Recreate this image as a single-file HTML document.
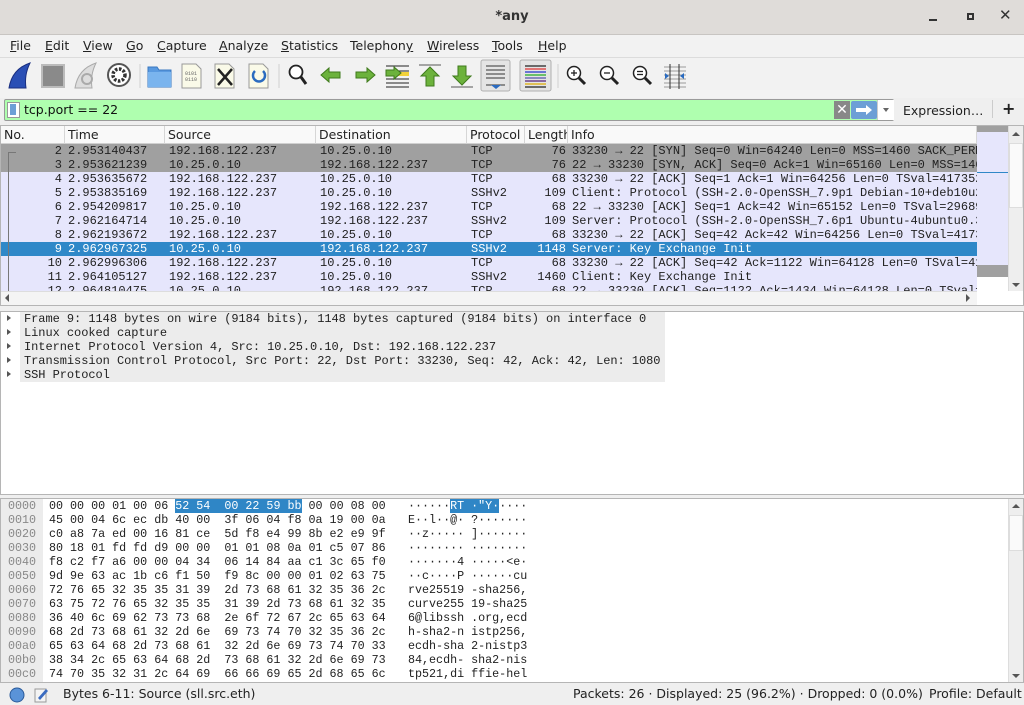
<!DOCTYPE html>
<html><head><meta charset="utf-8"><style>
*{margin:0;padding:0;box-sizing:border-box}
body{width:1024px;height:705px;overflow:hidden;background:#efefef;font-family:"DejaVu Sans","Liberation Sans",sans-serif;font-size:12.5px;color:#222;position:relative}
.a{position:absolute}
.mono{font-family:"Liberation Mono",monospace;font-size:12px;white-space:pre}
#title{left:0;top:0;width:1024px;height:35px;background:#dfdcd9;border-bottom:1px solid #c8c5c2}
#menu{left:0;top:35px;width:1024px;height:22px;background:#f2f2f2}
#menu span{position:absolute;top:3px}
#tb{left:0;top:57px;width:1024px;height:41px;background:#f2f2f2;border-top:1px solid #dcdcdc}
#filt{left:4px;top:99px;width:890px;height:22px;background:#afffaf;border:1px solid #9a9a9a;border-radius:2px}
#plist{left:0;top:125px;width:1024px;height:181px;background:#fff;border:1px solid #b5b5b5}
.hdr{position:absolute;top:126px;height:18px;border-right:1px solid #d6d6d6;background:#f9f9f9;border-bottom:1px solid #d0d0d0;padding-left:3px;line-height:17px;font-size:12.5px}
.row{position:absolute;left:1px;width:976px;height:14px;line-height:14px;overflow:hidden}
.row span{position:absolute;top:0}
#det{left:0;top:311px;width:1024px;height:184px;background:#fff;border:1px solid #b5b5b5}
.dl{position:absolute;left:20px;width:645px;height:14px;line-height:14px;background:#ececec;font-family:"Liberation Mono",monospace;font-size:12px;letter-spacing:-0.05px;white-space:pre;color:#222;padding-left:4px}
.tri{position:absolute;left:7px;width:0;height:0;border-left:4px solid #555;border-top:3.5px solid transparent;border-bottom:3.5px solid transparent}
#hex{left:0;top:498px;width:1024px;height:185px;background:#fff;border:1px solid #b5b5b5}
.hr{position:absolute;left:0;height:14px;line-height:14px;font-family:"Liberation Mono",monospace;font-size:11.7px;white-space:pre;color:#222}
.sel{background:#2f86c6;color:#fff}
#status{left:0;top:683px;width:1024px;height:22px;background:#efefef}
</style></head><body>

<div id="title" class="a"><div class="a" style="left:0;width:1024px;top:9px;text-align:center;font-weight:bold;font-size:13px;color:#333">*any</div>
<div class="a" style="left:929px;top:19px;width:8px;height:2px;background:#333"></div>
<div class="a" style="left:967px;top:13px;width:7px;height:7px;border:2px solid #333"></div>
<div class="a" style="left:999px;top:6px;font-size:15px;font-weight:bold;color:#333">✕</div>
</div>

<div id="menu" class="a">
<span style="left:10px"><u>F</u>ile</span><span style="left:45px"><u>E</u>dit</span><span style="left:83px"><u>V</u>iew</span><span style="left:126px"><u>G</u>o</span><span style="left:157px"><u>C</u>apture</span><span style="left:219px"><u>A</u>nalyze</span><span style="left:281px"><u>S</u>tatistics</span><span style="left:350px">Telephon<u>y</u></span><span style="left:427px"><u>W</u>ireless</span><span style="left:492px"><u>T</u>ools</span><span style="left:538px"><u>H</u>elp</span>
</div>

<div id="tb" class="a"></div>
<svg class="a" style="left:0;top:57px" width="700" height="41">
<path d="M9 31 Q12 12 30 6 Q24 18 26 31 Z" fill="#2a4fb5" stroke="#1a2f80"/>
<rect x="42" y="8" width="22" height="22" fill="#8a8a8a" stroke="#bbb" stroke-width="2"/>
<path d="M75 31 Q78 12 96 6 Q90 18 92 31 Z" fill="#ddd" stroke="#aaa"/><circle cx="87" cy="22" r="5" fill="none" stroke="#aaa" stroke-width="2"/>
<circle cx="119" cy="18" r="11" fill="#fff" stroke="#555" stroke-width="2"/><circle cx="119" cy="18" r="6" fill="none" stroke="#333" stroke-width="3.5" stroke-dasharray="2.5 1.5"/><circle cx="119" cy="18" r="2.5" fill="#fff"/>
<line x1="140" y1="7" x2="140" y2="31" stroke="#d0d0d0"/>
<path d="M148 10 h9 l2 3 h12 v17 h-23 Z" fill="#5a9ae0" stroke="#3a78c0"/><rect x="148" y="15" width="23" height="15" fill="#7ab4ee"/>
<path d="M182 7 h14 l5 5 v19 h-19 Z" fill="#fafae8" stroke="#999"/><text x="185" y="18" font-size="5" fill="#666" font-family="Liberation Mono">0101</text><text x="185" y="24" font-size="5" fill="#666" font-family="Liberation Mono">0110</text>
<path d="M215 7 h14 l5 5 v19 h-19 Z" fill="#fafae8" stroke="#999"/><path d="M218 12 L232 28 M232 12 L218 28" stroke="#222" stroke-width="2.5"/>
<path d="M249 7 h14 l5 5 v19 h-19 Z" fill="#fafae8" stroke="#999"/><path d="M263 14 A6 6 0 1 1 255 14" fill="none" stroke="#2a6bc0" stroke-width="2.5"/>
<line x1="279" y1="7" x2="279" y2="31" stroke="#d0d0d0"/>
<circle cx="296" cy="15" r="6.5" fill="#fff" stroke="#222" stroke-width="1.8"/><line x1="301" y1="20" x2="306" y2="27" stroke="#222" stroke-width="3"/>
<path d="M321 18 l8 -7 v4 h11 v6 h-11 v4 Z" fill="#6cb23c" stroke="#3f7a1c"/>
<path d="M375 18 l-8 -7 v4 h-11 v6 h11 v4 Z" fill="#6cb23c" stroke="#3f7a1c"/>
<g stroke="#222"><line x1="386" y1="22" x2="409" y2="22"/><line x1="386" y1="26" x2="409" y2="26"/><line x1="386" y1="30" x2="409" y2="30"/><line x1="398" y1="14" x2="409" y2="14"/><line x1="386" y1="9" x2="409" y2="9"/></g><rect x="398" y="15" width="11" height="4" fill="#f3d23a"/>
<path d="M401 16 l-7 -6 v3 h-8 v6 h8 v3 Z" fill="#6cb23c" stroke="#3f7a1c"/>
<line x1="419" y1="8" x2="441" y2="8" stroke="#555"/><path d="M430 10 l9 9 h-5 v10 h-8 v-10 h-5 Z" fill="#6cb23c" stroke="#3f7a1c"/>
<line x1="451" y1="30" x2="473" y2="30" stroke="#555"/><path d="M462 28 l9 -9 h-5 v-10 h-8 v10 h-5 Z" fill="#6cb23c" stroke="#3f7a1c"/>
<rect x="481" y="3" width="29" height="31" rx="2" fill="#e4e4e4" stroke="#b0b0b0"/><g stroke="#333"><line x1="486" y1="9" x2="505" y2="9"/><line x1="486" y1="13" x2="505" y2="13"/><line x1="486" y1="17" x2="505" y2="17"/><line x1="486" y1="21" x2="505" y2="21"/><line x1="486" y1="28" x2="505" y2="28"/></g><path d="M491 28 h10 l-5 4 Z" fill="#2a6bc0"/>
<rect x="520" y="3" width="31" height="31" rx="2" fill="#e4e4e4" stroke="#b0b0b0"/><g stroke-width="1.3"><line x1="525" y1="9" x2="546" y2="9" stroke="#222"/><line x1="525" y1="12" x2="546" y2="12" stroke="#d33"/><line x1="525" y1="15" x2="546" y2="15" stroke="#23c"/><line x1="525" y1="18" x2="546" y2="18" stroke="#2a2"/><line x1="525" y1="21" x2="546" y2="21" stroke="#55a"/><line x1="525" y1="24" x2="546" y2="24" stroke="#527"/><line x1="525" y1="27" x2="546" y2="27" stroke="#da0"/><line x1="525" y1="30" x2="546" y2="30" stroke="#222"/></g>
<line x1="558" y1="7" x2="558" y2="31" stroke="#d0d0d0"/>
<g fill="#fff" stroke="#222" stroke-width="1.5"><circle cx="574" cy="16" r="6.5"/><circle cx="607" cy="16" r="6.5"/><circle cx="640" cy="16" r="6.5"/></g>
<g stroke="#222" stroke-width="3"><line x1="579" y1="21" x2="585" y2="27"/><line x1="612" y1="21" x2="618" y2="27"/><line x1="645" y1="21" x2="651" y2="27"/></g>
<g stroke="#222" stroke-width="1.3"><line x1="571" y1="16" x2="577" y2="16"/><line x1="574" y1="13" x2="574" y2="19"/><line x1="604" y1="16" x2="610" y2="16"/><line x1="637" y1="14.5" x2="643" y2="14.5"/><line x1="637" y1="17.5" x2="643" y2="17.5"/></g>
<g stroke="#999"><line x1="664" y1="10" x2="686" y2="10"/><line x1="664" y1="14" x2="686" y2="14"/><line x1="664" y1="18" x2="686" y2="18"/><line x1="664" y1="22" x2="686" y2="22"/><line x1="664" y1="26" x2="686" y2="26"/><line x1="664" y1="30" x2="686" y2="30"/></g><g stroke="#333"><line x1="670" y1="7" x2="670" y2="32"/><line x1="679" y1="7" x2="679" y2="32"/></g><path d="M665 16 l4 3 l-4 3Z M684 16 l-4 3 l4 3Z" fill="#2a6bc0"/>
</svg>

<div id="filt" class="a"><div class="a" style="left:2px;top:2px;width:13px;height:16px;background:#fff;border:1px solid #999"></div><div class="a" style="left:5px;top:4px;width:6px;height:11px;background:#6d9fd6"></div>
<div class="a" style="left:19px;top:2px;font-size:12.5px;color:#111">tcp.port == 22</div>
<div class="a" style="left:829px;top:1px;width:16px;height:18px;background:#888;color:#fff;text-align:center;font-size:14px;line-height:18px">✕</div>
<div class="a" style="left:846px;top:1px;width:26px;height:18px;background:#6d9fd6;border-radius:2px"><svg width="26" height="18"><path d="M5 7 h10 v-3 l6 5 l-6 5 v-3 h-10Z" fill="#fff"/></svg></div>
<div class="a" style="left:872px;top:0;width:17px;height:20px;background:#fff;border-left:1px solid #ccc"></div><div class="a" style="left:878px;top:8px;border-top:4px solid #666;border-left:3.5px solid transparent;border-right:3.5px solid transparent"></div>
</div>
<div class="a" style="left:903px;top:103px">Expression…</div>
<div class="a" style="left:992px;top:100px;width:1px;height:18px;background:#ccc"></div>
<div class="a" style="left:1002px;top:99px;font-size:16px;font-weight:bold">+</div>

<div id="plist" class="a"></div>
<div class="hdr" style="left:1px;width:64px">No.</div>
<div class="hdr" style="left:65px;width:100px">Time</div>
<div class="hdr" style="left:165px;width:151px">Source</div>
<div class="hdr" style="left:316px;width:151px">Destination</div>
<div class="hdr" style="left:467px;width:58px">Protocol</div>
<div class="hdr" style="left:525px;width:43px;overflow:hidden;white-space:nowrap">Length</div>
<div class="hdr" style="left:568px;width:409px">Info</div>

<div class="mono">
<div class="row" style="top:144px;background:#a0a0a0;color:#222"><span style="left:0;width:61px;text-align:right">2</span><span style="left:67px">2.953140437</span><span style="left:168px">192.168.122.237</span><span style="left:319px">10.25.0.10</span><span style="left:470px">TCP</span><span style="left:525px;width:40px;text-align:right">76</span><span style="left:571px">33230 → 22 [SYN] Seq=0 Win=64240 Len=0 MSS=1460 SACK_PERM</span></div>
<div class="row" style="top:158px;background:#a0a0a0;color:#222"><span style="left:0;width:61px;text-align:right">3</span><span style="left:67px">2.953621239</span><span style="left:168px">10.25.0.10</span><span style="left:319px">192.168.122.237</span><span style="left:470px">TCP</span><span style="left:525px;width:40px;text-align:right">76</span><span style="left:571px">22 → 33230 [SYN, ACK] Seq=0 Ack=1 Win=65160 Len=0 MSS=1460</span></div>
<div class="row" style="top:172px;background:#e6e6fc"><span style="left:0;width:61px;text-align:right">4</span><span style="left:67px">2.953635672</span><span style="left:168px">192.168.122.237</span><span style="left:319px">10.25.0.10</span><span style="left:470px">TCP</span><span style="left:525px;width:40px;text-align:right">68</span><span style="left:571px">33230 → 22 [ACK] Seq=1 Ack=1 Win=64256 Len=0 TSval=4173521</span></div>
<div class="row" style="top:186px;background:#e6e6fc"><span style="left:0;width:61px;text-align:right">5</span><span style="left:67px">2.953835169</span><span style="left:168px">192.168.122.237</span><span style="left:319px">10.25.0.10</span><span style="left:470px">SSHv2</span><span style="left:525px;width:40px;text-align:right">109</span><span style="left:571px">Client: Protocol (SSH-2.0-OpenSSH_7.9p1 Debian-10+deb10u2</span></div>
<div class="row" style="top:200px;background:#e6e6fc"><span style="left:0;width:61px;text-align:right">6</span><span style="left:67px">2.954209817</span><span style="left:168px">10.25.0.10</span><span style="left:319px">192.168.122.237</span><span style="left:470px">TCP</span><span style="left:525px;width:40px;text-align:right">68</span><span style="left:571px">22 → 33230 [ACK] Seq=1 Ack=42 Win=65152 Len=0 TSval=296891</span></div>
<div class="row" style="top:214px;background:#e6e6fc"><span style="left:0;width:61px;text-align:right">7</span><span style="left:67px">2.962164714</span><span style="left:168px">10.25.0.10</span><span style="left:319px">192.168.122.237</span><span style="left:470px">SSHv2</span><span style="left:525px;width:40px;text-align:right">109</span><span style="left:571px">Server: Protocol (SSH-2.0-OpenSSH_7.6p1 Ubuntu-4ubuntu0.3</span></div>
<div class="row" style="top:228px;background:#e6e6fc"><span style="left:0;width:61px;text-align:right">8</span><span style="left:67px">2.962193672</span><span style="left:168px">192.168.122.237</span><span style="left:319px">10.25.0.10</span><span style="left:470px">TCP</span><span style="left:525px;width:40px;text-align:right">68</span><span style="left:571px">33230 → 22 [ACK] Seq=42 Ack=42 Win=64256 Len=0 TSval=41735</span></div>
<div class="row" style="top:242px;background:#2f88c8;color:#fff"><span style="left:0;width:61px;text-align:right">9</span><span style="left:67px">2.962967325</span><span style="left:168px">10.25.0.10</span><span style="left:319px">192.168.122.237</span><span style="left:470px">SSHv2</span><span style="left:525px;width:40px;text-align:right">1148</span><span style="left:571px">Server: Key Exchange Init</span></div>
<div class="row" style="top:256px;background:#e6e6fc"><span style="left:0;width:61px;text-align:right">10</span><span style="left:67px">2.962996306</span><span style="left:168px">192.168.122.237</span><span style="left:319px">10.25.0.10</span><span style="left:470px">TCP</span><span style="left:525px;width:40px;text-align:right">68</span><span style="left:571px">33230 → 22 [ACK] Seq=42 Ack=1122 Win=64128 Len=0 TSval=41</span></div>
<div class="row" style="top:270px;background:#e6e6fc"><span style="left:0;width:61px;text-align:right">11</span><span style="left:67px">2.964105127</span><span style="left:168px">192.168.122.237</span><span style="left:319px">10.25.0.10</span><span style="left:470px">SSHv2</span><span style="left:525px;width:40px;text-align:right">1460</span><span style="left:571px">Client: Key Exchange Init</span></div>
<div class="row" style="top:284px;height:7px;background:#e6e6fc"><span style="left:0;width:61px;text-align:right">12</span><span style="left:67px">2.964810475</span><span style="left:168px">10.25.0.10</span><span style="left:319px">192.168.122.237</span><span style="left:470px">TCP</span><span style="left:525px;width:40px;text-align:right">68</span><span style="left:571px">22 → 33230 [ACK] Seq=1122 Ack=1434 Win=64128 Len=0 TSval=</span></div>
</div>
<div class="a" style="left:8px;top:152px;width:1px;height:139px;background:#777"></div>
<div class="a" style="left:8px;top:152px;width:8px;height:1px;background:#777"></div>
<div class="a" style="left:1px;top:291px;width:976px;height:14px;background:#f4f4f4;border-top:1px solid #ddd"></div>
<div class="a" style="left:5px;top:294px;border-right:4px solid #555;border-top:4px solid transparent;border-bottom:4px solid transparent"></div>
<div class="a" style="left:966px;top:294px;border-left:4px solid #555;border-top:4px solid transparent;border-bottom:4px solid transparent"></div>
<div class="a" style="left:977px;top:126px;width:31px;height:165px;background:#e6e6fc"></div>
<div class="a" style="left:977px;top:126px;width:31px;height:6px;background:#a0a0a0"></div>
<div class="a" style="left:977px;top:172px;width:31px;height:1px;background:#2f88c8"></div>
<div class="a" style="left:977px;top:265px;width:31px;height:12px;background:#a0a0a0"></div>
<div class="a" style="left:977px;top:277px;width:31px;height:14px;background:#fff"></div>
<div class="a" style="left:1008px;top:126px;width:15px;height:165px;background:#eee;border-left:1px solid #ddd"></div>
<div class="a" style="left:1009px;top:143px;width:14px;height:65px;background:#fafafa;border:1px solid #ddd"></div>
<div class="a" style="left:1012px;top:132px;border-bottom:4px solid #555;border-left:4px solid transparent;border-right:4px solid transparent"></div>
<div class="a" style="left:1012px;top:283px;border-top:4px solid #555;border-left:4px solid transparent;border-right:4px solid transparent"></div>

<div id="det" class="a"></div>
<div class="dl" style="top:312px">Frame 9: 1148 bytes on wire (9184 bits), 1148 bytes captured (9184 bits) on interface 0</div>
<div class="dl" style="top:326px">Linux cooked capture</div>
<div class="dl" style="top:340px">Internet Protocol Version 4, Src: 10.25.0.10, Dst: 192.168.122.237</div>
<div class="dl" style="top:354px">Transmission Control Protocol, Src Port: 22, Dst Port: 33230, Seq: 42, Ack: 42, Len: 1080</div>
<div class="dl" style="top:368px">SSH Protocol</div>
<div class="tri" style="top:315px"></div><div class="tri" style="top:329px"></div><div class="tri" style="top:343px"></div><div class="tri" style="top:357px"></div><div class="tri" style="top:371px"></div>

<div id="hex" class="a"></div>
<div class="a" style="left:1px;top:499px;width:42px;height:183px;background:#ececec"></div>
<div class="a" style="left:1008px;top:499px;width:15px;height:183px;background:#eee;border-left:1px solid #ddd"></div>
<div class="a" style="left:1009px;top:515px;width:14px;height:36px;background:#fafafa;border:1px solid #ddd"></div>
<div class="a" style="left:1012px;top:504px;border-bottom:4px solid #555;border-left:4px solid transparent;border-right:4px solid transparent"></div>
<div class="a" style="left:1012px;top:674px;border-top:4px solid #555;border-left:4px solid transparent;border-right:4px solid transparent"></div>

<div class="hr" style="top:499px;left:8px;color:#888">0000
0010
0020
0030
0040
0050
0060
0070
0080
0090
00a0
00b0
00c0</div>
<div class="hr" style="top:499px;left:49px">00 00 00 01 00 06 <span class="sel">52 54  00 22 59 bb</span> 00 00 08 00
45 00 04 6c ec db 40 00  3f 06 04 f8 0a 19 00 0a
c0 a8 7a ed 00 16 81 ce  5d f8 e4 99 8b e2 e9 9f
80 18 01 fd fd d9 00 00  01 01 08 0a 01 c5 07 86
f8 c2 f7 a6 00 00 04 34  06 14 84 aa c1 3c 65 f0
9d 9e 63 ac 1b c6 f1 50  f9 8c 00 00 01 02 63 75
72 76 65 32 35 35 31 39  2d 73 68 61 32 35 36 2c
63 75 72 76 65 32 35 35  31 39 2d 73 68 61 32 35
36 40 6c 69 62 73 73 68  2e 6f 72 67 2c 65 63 64
68 2d 73 68 61 32 2d 6e  69 73 74 70 32 35 36 2c
65 63 64 68 2d 73 68 61  32 2d 6e 69 73 74 70 33
38 34 2c 65 63 64 68 2d  73 68 61 32 2d 6e 69 73
74 70 35 32 31 2c 64 69  66 66 69 65 2d 68 65 6c</div>
<div class="hr" style="top:499px;left:408px">······<span class="sel">RT ·"Y·</span>····
E··l··@· ?·······
··z····· ]·······
········ ········
·······4 ·····&lt;e·
··c····P ······cu
rve25519 -sha256,
curve255 19-sha25
6@libssh .org,ecd
h-sha2-n istp256,
ecdh-sha 2-nistp3
84,ecdh- sha2-nis
tp521,di ffie-hel</div>

<div id="status" class="a">
<svg class="a" style="left:8px;top:3px" width="50" height="18"><circle cx="9" cy="9" r="7" fill="#5a93d8" stroke="#2a5a9a"/><rect x="27" y="3" width="11" height="13" fill="#f4f4f4" stroke="#999"/><path d="M30 12 l8 -9 l2 2 l-8 9 Z" fill="#3a6bc0"/></svg>
<div class="a" style="left:63px;top:3px">Bytes 6-11: Source (sll.src.eth)</div>
<div class="a" style="left:573px;top:3px">Packets: 26 · Displayed: 25 (96.2%) · Dropped: 0 (0.0%)</div>
<div class="a" style="left:929px;top:3px">Profile: Default</div>
</div>
</body></html>
